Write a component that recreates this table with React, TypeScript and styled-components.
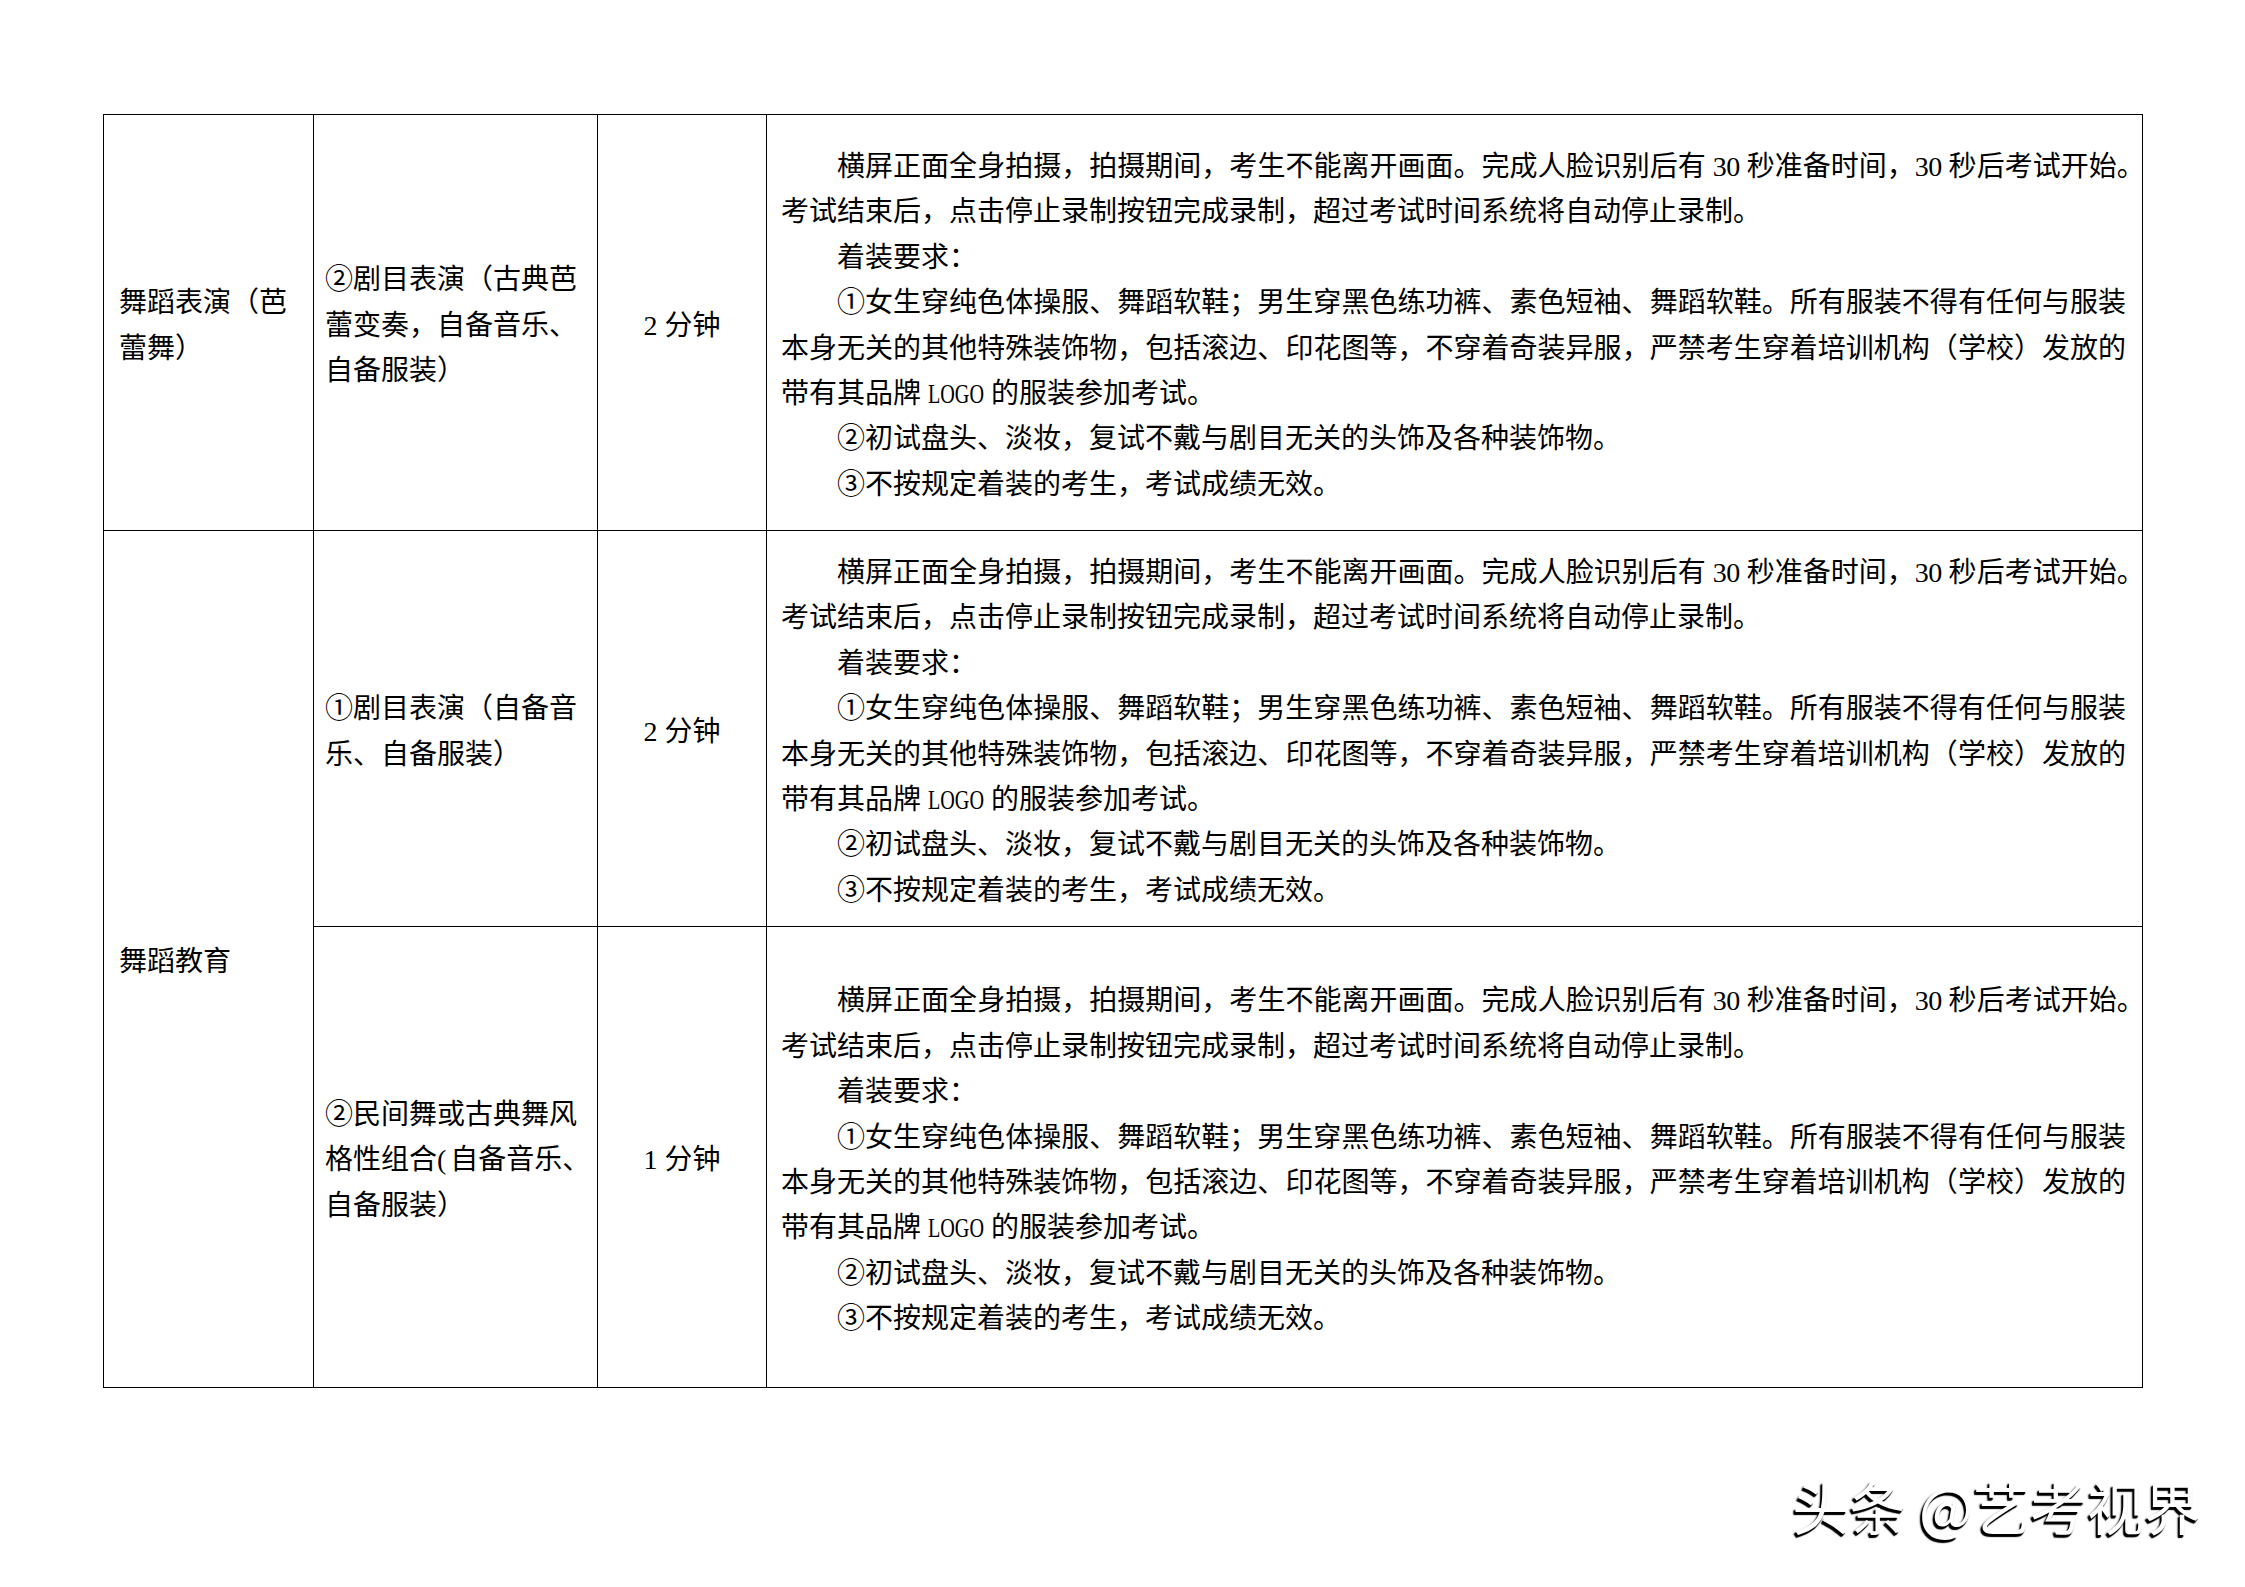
import React from 'react';
import styled, { createGlobalStyle } from 'styled-components';

const GlobalStyle = createGlobalStyle`
  html, body {
    margin: 0;
    padding: 0;
    background: #ffffff;
  }
  body {
    font-family: "Liberation Serif", "Noto Sans CJK SC", serif;
    color: #000000;
  }
`;

const Page = styled.div`
  width: 2245px;
  min-height: 1587px;
  box-sizing: border-box;
  padding: 114px 0 0 103px;
  display: flex;
  flex-direction: column;
  background: #ffffff;
`;

const Table = styled.div`
  display: grid;
  grid-template-columns: 210px 284px 169px 1376px;
  grid-template-rows: 416px 396px 461px;
  width: max-content;
  border-top: 1px solid #000;
  border-left: 1px solid #000;
  font-size: 28px;
  line-height: 45.4px;
`;

const BaseCell = styled.div`
  box-sizing: border-box;
  border-right: 1px solid #000;
  border-bottom: 1px solid #000;
  display: flex;
  flex-direction: column;
  justify-content: center;
  padding-top: 6px;
  min-width: 0;
`;

const CategoryCell = styled(BaseCell)<{ $span?: number }>`
  padding-left: 15px;
  padding-right: 14px;
  grid-row: ${(p) => (p.$span ? `span ${p.$span}` : 'auto')};
`;

const ItemCell = styled(BaseCell)`
  padding-left: 11px;
  padding-right: 2px;
`;

const ItemLine = styled.span`
  display: block;
  white-space: nowrap;
`;

const DurationCell = styled(BaseCell)`
  align-items: center;
  text-align: center;
`;

const DetailCell = styled(BaseCell)`
  padding-left: 14px;
  padding-right: 16px;
`;

const Line = styled.span<{ $indent?: boolean; $justify?: boolean; $tight?: boolean }>`
  display: block;
  text-indent: ${(p) => (p.$indent ? '2em' : '0')};
  text-align: ${(p) => (p.$justify ? 'justify' : 'left')};
  text-align-last: ${(p) => (p.$justify ? 'justify' : 'auto')};
  letter-spacing: ${(p) => (p.$tight ? '-0.6px' : 'normal')};
`;

const Hang = styled.span`
  margin-right: -0.65em;
`;

const NarrowParen = styled.span`
  font-family: "Liberation Serif", serif;
  margin-right: 4px;
`;

const Condensed = styled.span`
  display: inline-block;
  width: 56px;
  white-space: nowrap;
  transform: scaleX(0.72);
  transform-origin: left center;
  text-indent: 0;
`;

const Watermark = styled.div`
  align-self: flex-end;
  margin: 89px 44px 0 0;
  font-family: "Noto Sans CJK SC", sans-serif;
  font-size: 57px;
  line-height: 57px;
  color: #ffffff;
  text-shadow: -2px 3px 1px #000, -1px 2px 1px #000, -2px 2px 2px rgba(0, 0, 0, 0.7);
  white-space: nowrap;
`;

const DetailText: React.FC = () => (
  <>
    <Line $indent $justify $tight>
      横屏正面全身拍摄，拍摄期间，考生不能离开画面。完成人脸识别后有 30 秒准备时间，30 秒后考试开始<Hang>。</Hang>
    </Line>
    <Line>考试结束后，点击停止录制按钮完成录制，超过考试时间系统将自动停止录制。</Line>
    <Line $indent>着装要求：</Line>
    <Line $indent $justify>
      ①女生穿纯色体操服、舞蹈软鞋；男生穿黑色练功裤、素色短袖、舞蹈软鞋。所有服装不得有任何与服装
    </Line>
    <Line $justify>
      本身无关的其他特殊装饰物，包括滚边、印花图等，不穿着奇装异服，严禁考生穿着培训机构（学校）发放的
    </Line>
    <Line>
      带有其品牌 <Condensed>LOGO</Condensed> 的服装参加考试。
    </Line>
    <Line $indent>②初试盘头、淡妆，复试不戴与剧目无关的头饰及各种装饰物。</Line>
    <Line $indent>③不按规定着装的考生，考试成绩无效。</Line>
  </>
);

export default function App() {
  return (
    <>
      <GlobalStyle />
      <Page lang="zh-CN">
        <Table>
          <CategoryCell>舞蹈表演（芭蕾舞）</CategoryCell>
          <ItemCell>
            <ItemLine>②剧目表演（古典芭</ItemLine>
            <ItemLine>蕾变奏，自备音乐、</ItemLine>
            <ItemLine>自备服装）</ItemLine>
          </ItemCell>
          <DurationCell>2 分钟</DurationCell>
          <DetailCell>
            <DetailText />
          </DetailCell>

          <CategoryCell $span={2}>舞蹈教育</CategoryCell>
          <ItemCell>
            <ItemLine>①剧目表演（自备音</ItemLine>
            <ItemLine>乐、自备服装）</ItemLine>
          </ItemCell>
          <DurationCell>2 分钟</DurationCell>
          <DetailCell>
            <DetailText />
          </DetailCell>

          <ItemCell>
            <ItemLine>②民间舞或古典舞风</ItemLine>
            <ItemLine>
              格性组合<NarrowParen>(</NarrowParen>自备音乐、
            </ItemLine>
            <ItemLine>自备服装）</ItemLine>
          </ItemCell>
          <DurationCell>1 分钟</DurationCell>
          <DetailCell>
            <DetailText />
          </DetailCell>
        </Table>
        <Watermark>头条 @艺考视界</Watermark>
      </Page>
    </>
  );
}
